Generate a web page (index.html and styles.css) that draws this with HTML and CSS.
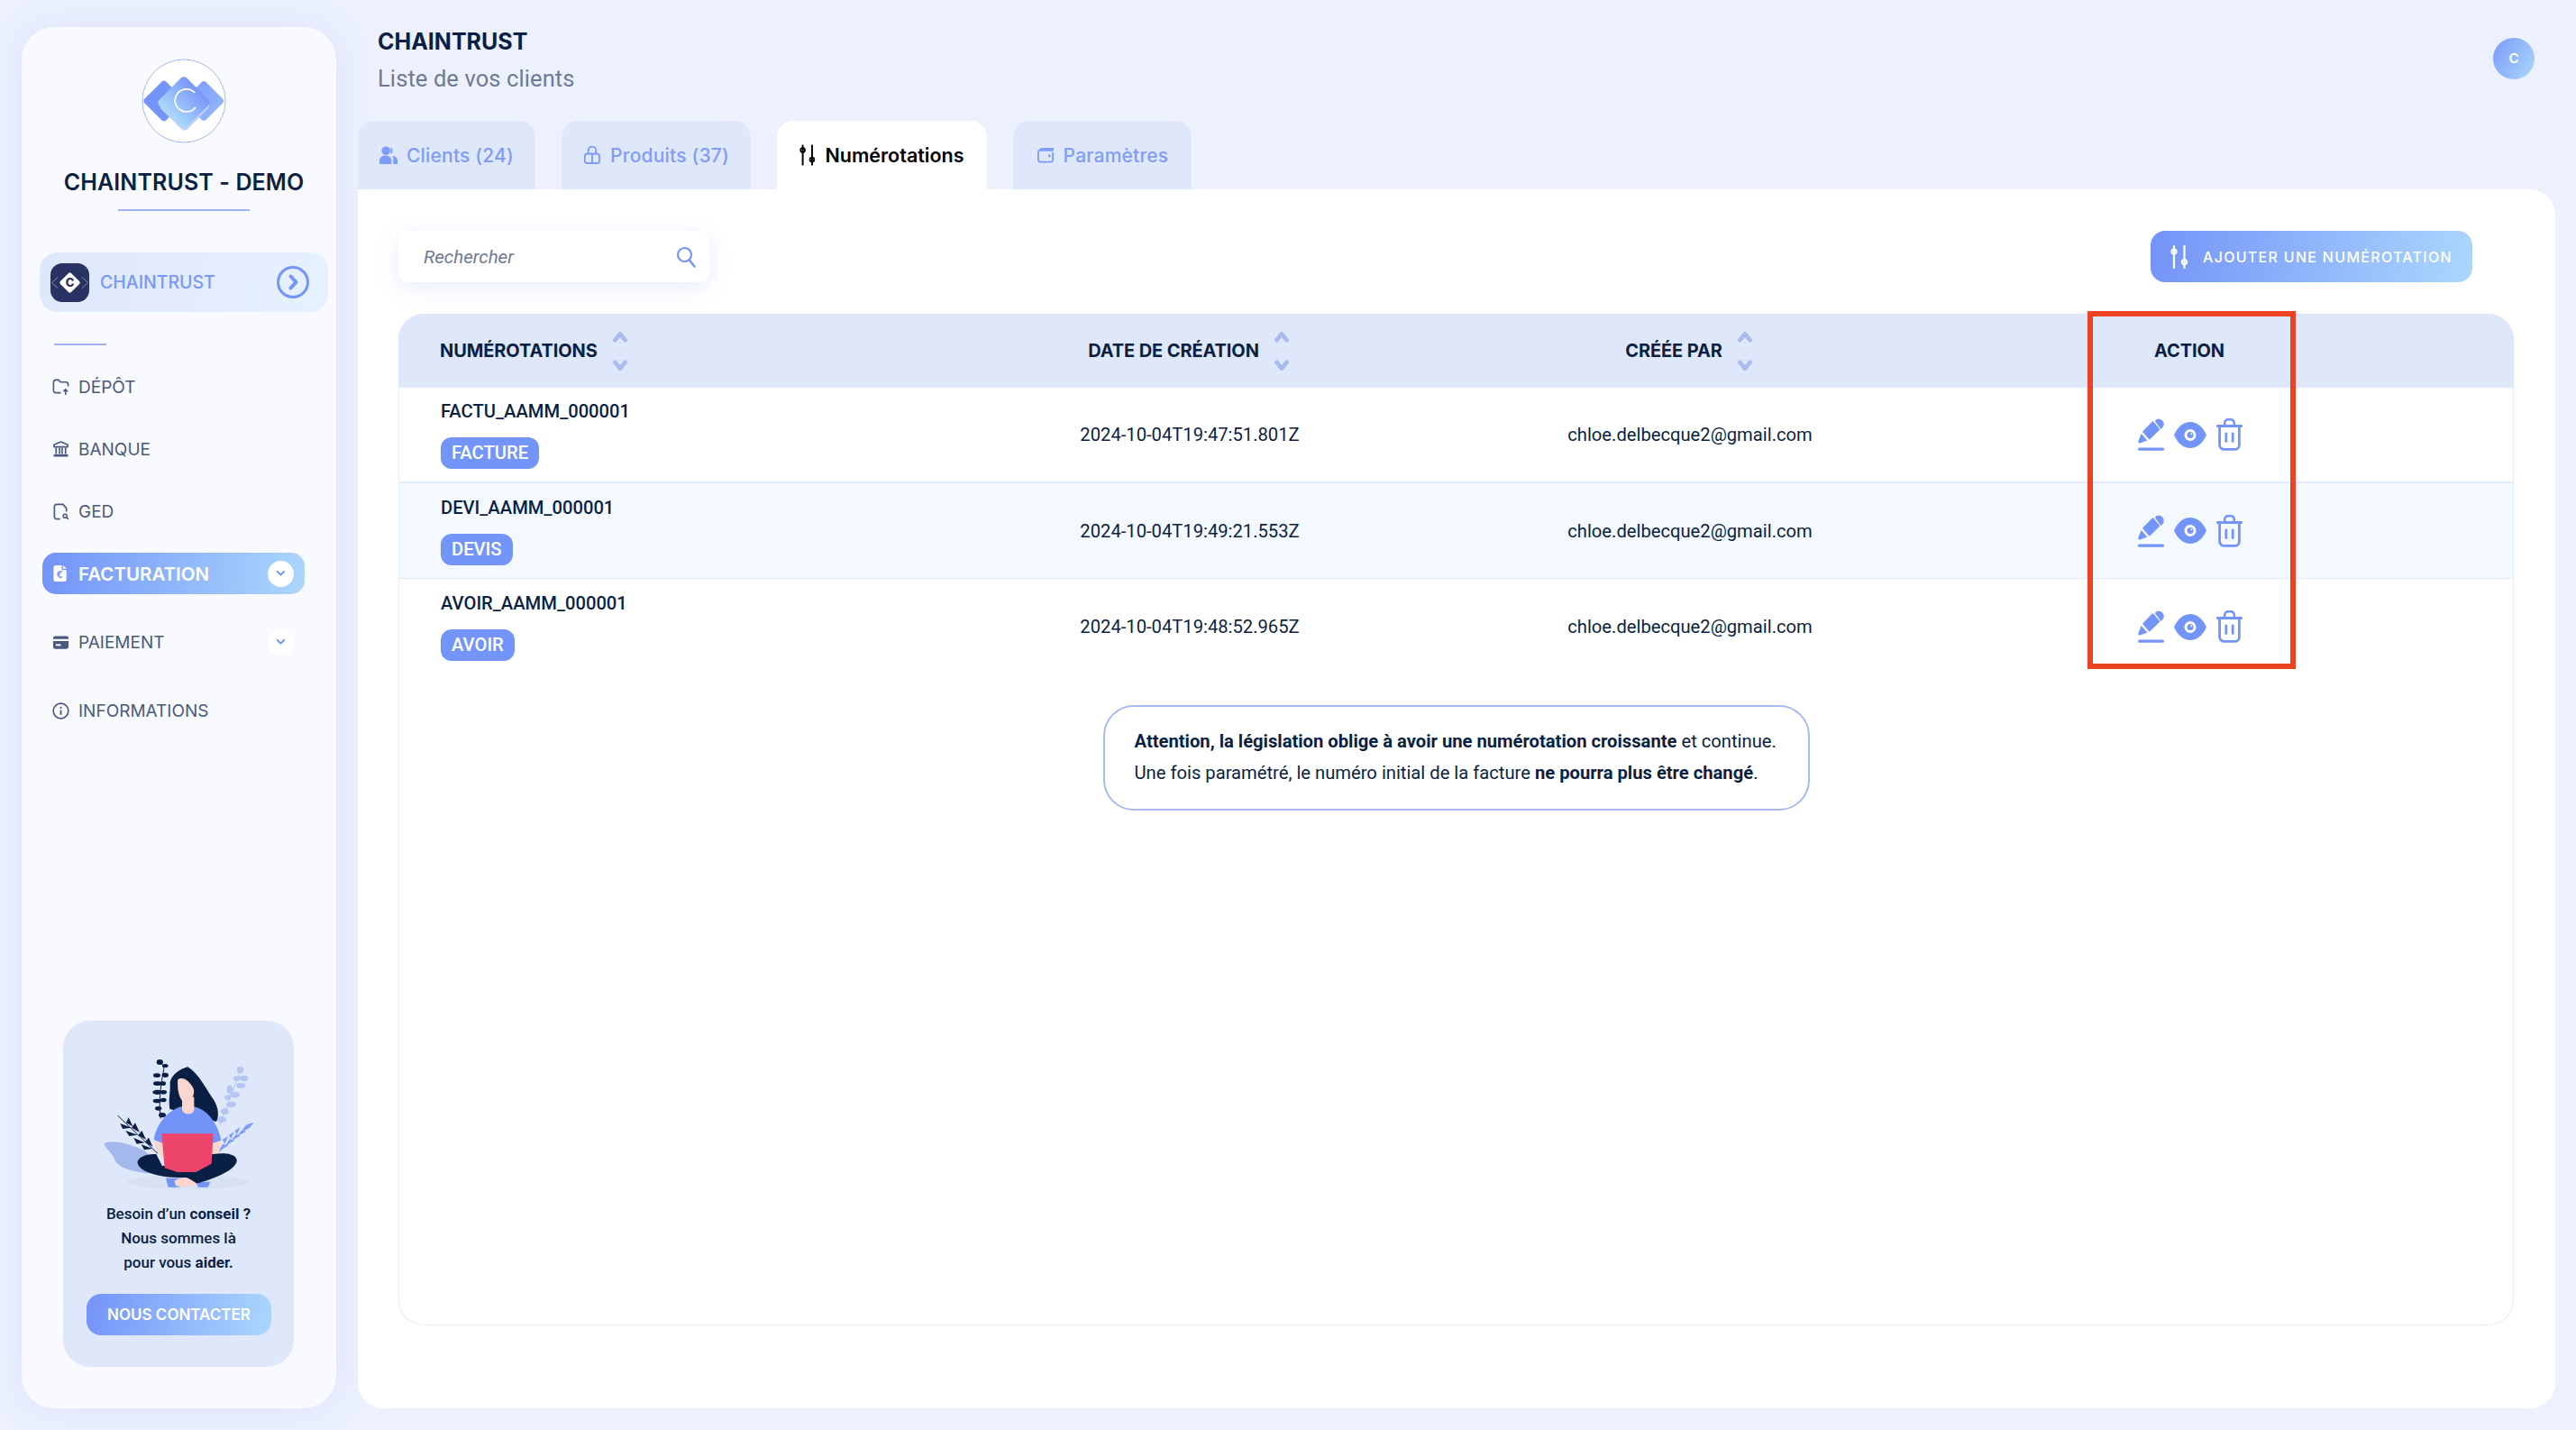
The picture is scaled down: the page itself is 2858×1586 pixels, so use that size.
FILE: index.html
```html
<!DOCTYPE html>
<html lang="fr">
<head>
<meta charset="utf-8">
<title>Chaintrust</title>
<link rel="stylesheet" href="styles.css">
</head>
<body>
<svg class="defs" width="0" height="0" aria-hidden="true">
  <defs>
    <linearGradient id="logoA" x1="0" y1="0" x2="0" y2="1"><stop offset="0" stop-color="#7896f7"/><stop offset="1" stop-color="#abd9fd"/></linearGradient>
    <linearGradient id="logoB" x1="0" y1="0" x2="1" y2="0"><stop offset="0" stop-color="#83a3fa"/><stop offset="1" stop-color="#8fb3fb"/></linearGradient>
    <symbol id="i-up" viewBox="0 0 18 14"><path d="M3 11 9 3.5 15 11" fill="none" stroke="#a9bcf0" stroke-width="5" stroke-linecap="round" stroke-linejoin="round"/></symbol>
    <symbol id="i-down" viewBox="0 0 18 14"><path d="M3 3 9 10.5 15 3" fill="none" stroke="#a9bcf0" stroke-width="5" stroke-linecap="round" stroke-linejoin="round"/></symbol>
    <symbol id="i-edit" viewBox="0 0 29 36">
      <path d="M6 14.8 16.500 4 23.500 12.200 12.800 22.800Z" fill="#7395f9" stroke="#7395f9" stroke-width="1.500" stroke-linejoin="round"/>
      <path d="M19.500 2.200C21.500 .2 25 .4 27.200 2.800 29.400 5.200 29.200 8.200 27.200 10.200L25.400 12 18.800 3Z" fill="#7395f9"/>
      <path d="M3.600 17 10.400 24.600 2.200 27.400C1 27.800 0 26.800.3 25.600Z" fill="#7395f9"/>
      <rect x="0" y="32.600" width="29" height="3.200" rx="1.600" fill="#7395f9"/>
    </symbol>
    <symbol id="i-eye" viewBox="0 0 36 29">
      <path d="M0 14.500C4 5 11 0 18 0s14 5 18 14.500C32 24 25 29 18 29S4 24 0 14.500Z" fill="#7395f9"/>
      <circle cx="18" cy="14.500" r="6.500" fill="#fff"/>
      <circle cx="18" cy="14.500" r="3.500" fill="#7395f9"/>
      <circle cx="19.300" cy="13.200" r="1" fill="#fff"/>
    </symbol>
    <symbol id="i-trash" viewBox="0 0 29 36">
      <path d="M9.200 7V5a3.800 3.800 0 0 1 3.800-3.800h3A3.800 3.800 0 0 1 19.800 5v2" fill="none" stroke="#7395f9" stroke-width="2.600"/>
      <path d="M1.400 8.600h26.200" stroke="#7395f9" stroke-width="3" stroke-linecap="round"/>
      <path d="M3.600 9v20.400a5 5 0 0 0 5 5h11.800a5 5 0 0 0 5-5V9" fill="none" stroke="#7395f9" stroke-width="2.800"/>
      <path d="M10.800 17v8.600M18.200 17v8.600" stroke="#7395f9" stroke-width="2.800" stroke-linecap="round"/>
    </symbol>
    <symbol id="i-sliders" viewBox="0 0 20 26">
      <path d="M4 1v24M15.500 1v24" stroke="currentColor" stroke-width="2.200" stroke-linecap="round"/>
      <circle cx="4" cy="7" r="2.600" fill="none" stroke="currentColor" stroke-width="2"/>
      <circle cx="15.500" cy="18.500" r="2.600" fill="none" stroke="currentColor" stroke-width="2"/>
    </symbol>
    <symbol id="i-chev" viewBox="0 0 16 12"><path d="M2.500 3 8 8.500 13.500 3" fill="none" stroke="#7395f9" stroke-width="3" stroke-linecap="round" stroke-linejoin="round"/></symbol>
  </defs>
</svg>

<div class="app">
  <aside class="sidebar">
    <div class="brand">
      <svg class="brand-logo" viewBox="470 193 284 284">
        <circle cx="612" cy="335" r="139" fill="#fff" stroke="#a4b6ee" stroke-width="3"/>
        <rect x="494" y="284" width="102" height="102" rx="12" transform="rotate(45 545 335)" fill="#7394f8"/>
        <rect x="629" y="285" width="100" height="100" rx="12" transform="rotate(45 679 335)" fill="url(#logoB)"/>
        <rect x="552" y="290" width="124" height="124" rx="14" transform="rotate(45 614 352)" fill="#c3d0fa"/>
        <rect x="547" y="275" width="130" height="130" rx="14" transform="rotate(45 612 340)" fill="url(#logoA)"/>
        <path d="M649 308a38 38 0 1 0 2 48" fill="none" stroke="#fff" stroke-width="5"/>
      </svg>
      <h1 class="brand-name">CHAINTRUST - DEMO</h1>
      <div class="brand-rule"></div>
    </div>

    <div class="workspace">
      <svg class="workspace-logo" viewBox="0 0 43 43">
        <rect width="43" height="43" rx="13" fill="#283263"/>
        <path d="M8 15.500 1.500 21.500 8 27.500M35 15.500 41.500 21.500 35 27.500" fill="none" stroke="#9aa3c4" stroke-width=".8"/>
        <rect x="13" y="13" width="17" height="17" rx="2" transform="rotate(45 21.500 21.500)" fill="#fff"/>
        <text class="workspace-c" x="21.500" y="26" text-anchor="middle">C</text>
      </svg>
      <span class="workspace-name">CHAINTRUST</span>
      <span class="workspace-go">
        <svg viewBox="0 0 36 36" width="36" height="36"><circle cx="18" cy="18" r="16.500" fill="none" stroke="#7395f9" stroke-width="3"/><path d="M15.500 11.500 21.500 18 15.500 24.500" fill="none" stroke="#7395f9" stroke-width="4" stroke-linecap="round" stroke-linejoin="round"/></svg>
      </span>
    </div>

    <div class="divider"></div>

    <nav class="nav">
      <a class="nav-item">
        <svg class="nav-icon" viewBox="0 0 20 20"><path d="M10 16.500H4a2.500 2.500 0 0 1-2.500-2.500V4A2.500 2.500 0 0 1 4 1.500h3.500l2 2.500H16a2.500 2.500 0 0 1 2.500 2.500V9M15.500 19v-6M13 15l2.500-2.500L18 15" fill="none" stroke="#4a5a7d" stroke-width="1.700"/></svg>
        <span>DÉPÔT</span>
      </a>
      <a class="nav-item">
        <svg class="nav-icon" viewBox="0 0 20 20"><path d="M10 1 18 4.500V7H2V4.500Z" fill="none" stroke="#4a5a7d" stroke-width="1.700" stroke-linejoin="round"/><path d="M4.500 8v7M8.500 8v7M11.500 8v7M15.500 8v7" stroke="#4a5a7d" stroke-width="1.800"/><rect x="1.500" y="15.500" width="17" height="3" rx="1.500" fill="#4a5a7d"/></svg>
        <span>BANQUE</span>
      </a>
      <a class="nav-item">
        <svg class="nav-icon" viewBox="0 0 20 20"><path d="M9 18.500H5A2.500 2.500 0 0 1 2.500 16V4A2.500 2.500 0 0 1 5 1.500h7.500L16.500 6v4" fill="none" stroke="#4a5a7d" stroke-width="1.800"/><circle cx="15" cy="15" r="2.200" fill="none" stroke="#4a5a7d" stroke-width="1.600"/><path d="M16.800 16.800 18.800 18.800" stroke="#4a5a7d" stroke-width="1.600"/></svg>
        <span>GED</span>
      </a>
      <a class="nav-item nav-active">
        <svg class="nav-icon" viewBox="0 0 20 20"><path d="M4.500 0H11v5.500h5.500V16a3 3 0 0 1-3 3H4.500a3 3 0 0 1-3-3V3a3 3 0 0 1 3-3Z" fill="#fff"/><path d="M12.500 0 16.500 4H12.500Z" fill="#fff"/><text class="nav-euro" x="8.500" y="15" text-anchor="middle">€</text></svg>
        <span>FACTURATION</span>
        <span class="nav-chev"><svg viewBox="0 0 16 12" width="11" height="8"><use href="#i-chev"/></svg></span>
      </a>
      <a class="nav-item nav-wide">
        <svg class="nav-icon" viewBox="0 0 20 20"><path d="M1 6V5a2.500 2.500 0 0 1 2.500-2.500h13A2.500 2.500 0 0 1 19 5v1ZM1 8.500h18V15a2.500 2.500 0 0 1-2.500 2.500h-13A2.500 2.500 0 0 1 1 15Z" fill="#4a5a7d"/><rect x="4" y="12" width="6" height="2" fill="#fff"/></svg>
        <span>PAIEMENT</span>
        <span class="nav-chev"><svg viewBox="0 0 16 12" width="11" height="8"><use href="#i-chev"/></svg></span>
      </a>
      <a class="nav-item">
        <svg class="nav-icon" viewBox="0 0 20 20"><circle cx="10" cy="10" r="8.800" fill="none" stroke="#4a5a7d" stroke-width="1.700"/><circle cx="10" cy="6.200" r="1.100" fill="#4a5a7d"/><path d="M10 9v5.500" stroke="#4a5a7d" stroke-width="2"/></svg>
        <span>INFORMATIONS</span>
      </a>
    </nav>

    <div class="help">
      <svg class="help-art" viewBox="225 165 510 435">
        <ellipse cx="507" cy="573" rx="203" ry="24" fill="#d7e1f2"/>
        <path d="M226 445C250 432 290 442 320 452 360 462 380 480 395 510L370 545C320 535 280 530 262 500 258 478 235 470 226 445Z" fill="#a5b8ec"/>
        <g fill="none" stroke="#0a1f44" stroke-width="3">
          <path d="M415 362C408 320 412 260 425 200 428 182 410 170 404 178"/>
          <path d="M272 352 405 478"/>
        </g>
        <g fill="#0a1f44">
          <ellipse cx="412" cy="174" rx="11" ry="9"/><ellipse cx="430" cy="186" rx="10" ry="6"/><ellipse cx="402" cy="218" rx="12" ry="7"/><ellipse cx="430" cy="217" rx="11" ry="8"/><ellipse cx="404" cy="245" rx="14" ry="7"/><ellipse cx="422" cy="245" rx="10" ry="7"/><ellipse cx="404" cy="274" rx="16" ry="8"/><ellipse cx="424" cy="274" rx="11" ry="7"/><ellipse cx="403" cy="303" rx="14" ry="7"/><ellipse cx="424" cy="300" rx="10" ry="7"/><ellipse cx="407" cy="328" rx="11" ry="7"/><ellipse cx="420" cy="350" rx="12" ry="8"/>
          <path d="M308 358 322 388 300 376ZM330 376 345 408 318 392ZM352 402 366 432 340 418ZM375 425 388 455 362 440ZM280 378 318 392 288 396ZM298 402 338 416 310 420ZM325 426 362 442 335 446ZM350 448 388 462 360 466Z"/>
        </g>
        <g stroke="#b6c6f3" fill="#b6c6f3" stroke-width="3">
          <path d="M680 205 610 385" fill="none"/>
          <circle cx="680" cy="200" r="10"/><ellipse cx="692" cy="228" rx="13" ry="8"/><ellipse cx="668" cy="228" rx="11" ry="7"/><ellipse cx="682" cy="252" rx="14" ry="8"/><ellipse cx="645" cy="265" rx="9" ry="13"/><ellipse cx="662" cy="283" rx="15" ry="8"/><ellipse cx="638" cy="292" rx="10" ry="8"/><ellipse cx="650" cy="315" rx="15" ry="8"/><ellipse cx="628" cy="338" rx="12" ry="9"/><ellipse cx="618" cy="365" rx="14" ry="9"/>
        </g>
        <path d="M722 376 608 472" fill="none" stroke="#7f9df8" stroke-width="4"/>
        <path d="M722 378C705 376 695 385 688 398 703 402 712 392 722 378ZM680 390 668 416 662 402ZM660 406 648 430 642 416ZM640 420 628 446 620 432ZM700 405 672 418 685 400ZM680 420 652 432 665 415ZM660 436 632 448 645 430ZM640 452 608 468 622 446Z" fill="#7f9df8"/>
        <path d="M505 190C480 196 452 215 446 240 448 270 440 300 445 330L600 372C612 350 605 315 585 290 565 262 540 210 505 190Z" fill="#0a1f44"/>
        <path d="M590 430H615C618 470 600 490 585 500ZM395 430H422L425 500C405 480 395 460 395 430Z" fill="#fbd6cf"/>
        <path d="M490 320C440 330 400 380 392 432 402 436 412 440 422 444L586 444C596 440 606 438 616 434 606 380 570 330 525 322Z" fill="#7393f8"/>
        <path d="M472 232C490 218 515 240 525 265 528 285 515 310 500 310 480 310 468 270 472 232Z" fill="#fbd6cf"/>
        <path d="M486 290H526V332C526 350 490 352 486 332Z" fill="#fbd6cf"/>
        <path d="M432 560H490L530 575 470 590H440ZM530 572H580L572 590H540Z" fill="#7393f8"/>
        <path d="M460 570C475 555 540 552 540 578 530 590 480 590 465 585Z" fill="#fbd6cf"/>
        <path d="M400 480C360 478 335 495 338 510 345 540 410 560 500 558 510 560 530 575 535 578 600 560 670 530 668 500 665 478 630 475 590 480L420 520Z" fill="#0a1f44"/>
        <path d="M418 412H590L584 512 532 540H470L428 526Z" fill="#ec446b"/>
      </svg>
      <p class="help-text">Besoin d’un <b>conseil ?</b><br>Nous sommes là<br>pour vous <b>aider.</b></p>
      <button class="help-btn">NOUS CONTACTER</button>
    </div>
  </aside>

  <main class="main">
    <header class="topbar">
      <div>
        <h2 class="page-title">CHAINTRUST</h2>
        <p class="page-sub">Liste de vos clients</p>
      </div>
      <div class="avatar">C</div>
    </header>

    <div class="tabs">
      <a class="tab">
        <svg class="tab-icon" viewBox="0 0 21 21"><circle cx="7.500" cy="5.500" r="5" fill="#7e9cf9"/><path d="M0 21v-4c0-4 3-6 7-6s7 2 7 6v4Z" fill="#7e9cf9"/><path d="M13 1.500a4.500 4.500 0 0 1 0 8ZM15 11.500c3.500 0 6 2 6 5.500v4h-5v-5c0-2-.2-3.500-1-4.500Z" fill="#7e9cf9"/></svg>
        <span>Clients (24)</span>
      </a>
      <a class="tab">
        <svg class="tab-icon" viewBox="0 0 21 21"><path d="M6 9V5a4.500 4.500 0 0 1 9 0v4" fill="none" stroke="#7e9cf9" stroke-width="2"/><rect x="2" y="9" width="17" height="11" rx="3" fill="none" stroke="#7e9cf9" stroke-width="2"/><path d="M10.500 9v11" stroke="#7e9cf9" stroke-width="2"/></svg>
        <span>Produits (37)</span>
      </a>
      <a class="tab tab-active">
        <svg class="tab-icon tab-sliders" viewBox="0 0 20 26"><use href="#i-sliders"/></svg>
        <span>Numérotations</span>
      </a>
      <a class="tab">
        <svg class="tab-icon" viewBox="0 0 21 21"><path d="M19 5H4.500A2.500 2.500 0 0 0 2 7.500V16a2.500 2.500 0 0 0 2.500 2.500h12A2.500 2.500 0 0 0 19 16V7M3 6c.5-2 2-3 3.500-3H19v2" fill="none" stroke="#7e9cf9" stroke-width="1.900"/><circle cx="15" cy="11.500" r="1.500" fill="#7e9cf9"/></svg>
        <span>Paramètres</span>
      </a>
    </div>

    <section class="panel">
      <div class="toolbar">
        <label class="search">
          <span class="search-text">Rechercher</span>
          <svg viewBox="0 0 22 24" width="22" height="24"><circle cx="9.500" cy="9.500" r="7.500" fill="none" stroke="#7395f9" stroke-width="2.200"/><path d="M15 15.500 20.500 22.500" stroke="#7395f9" stroke-width="2.400" stroke-linecap="round"/></svg>
        </label>
        <button class="add-btn">
          <svg class="add-icon" viewBox="0 0 20 26"><use href="#i-sliders"/></svg>
          <span>AJOUTER UNE NUMÉROTATION</span>
        </button>
      </div>

      <div class="table">
        <div class="thead row-grid">
          <div class="th th-first">NUMÉROTATIONS <span class="sort"><svg viewBox="0 0 18 14"><use href="#i-up"/></svg><svg viewBox="0 0 18 14"><use href="#i-down"/></svg></span></div>
          <div class="th th-center">DATE DE CRÉATION <span class="sort"><svg viewBox="0 0 18 14"><use href="#i-up"/></svg><svg viewBox="0 0 18 14"><use href="#i-down"/></svg></span></div>
          <div class="th th-center">CRÉÉE PAR <span class="sort"><svg viewBox="0 0 18 14"><use href="#i-up"/></svg><svg viewBox="0 0 18 14"><use href="#i-down"/></svg></span></div>
          <div class="th th-center">ACTION</div>
        </div>

        <div class="tr row-grid">
          <div class="td-name"><span class="name">FACTU_AAMM_000001</span><span class="badge">FACTURE</span></div>
          <div class="td">2024-10-04T19:47:51.801Z</div>
          <div class="td">chloe.delbecque2@gmail.com</div>
          <div class="actions">
            <svg class="act-a" viewBox="0 0 29 36"><use href="#i-edit"/></svg>
            <svg class="act-b" viewBox="0 0 36 29"><use href="#i-eye"/></svg>
            <svg class="act-a" viewBox="0 0 29 36"><use href="#i-trash"/></svg>
          </div>
        </div>
        <div class="tr row-grid tr-alt">
          <div class="td-name"><span class="name">DEVI_AAMM_000001</span><span class="badge">DEVIS</span></div>
          <div class="td">2024-10-04T19:49:21.553Z</div>
          <div class="td">chloe.delbecque2@gmail.com</div>
          <div class="actions">
            <svg class="act-a" viewBox="0 0 29 36"><use href="#i-edit"/></svg>
            <svg class="act-b" viewBox="0 0 36 29"><use href="#i-eye"/></svg>
            <svg class="act-a" viewBox="0 0 29 36"><use href="#i-trash"/></svg>
          </div>
        </div>
        <div class="tr row-grid tr-last">
          <div class="td-name"><span class="name">AVOIR_AAMM_000001</span><span class="badge">AVOIR</span></div>
          <div class="td">2024-10-04T19:48:52.965Z</div>
          <div class="td">chloe.delbecque2@gmail.com</div>
          <div class="actions">
            <svg class="act-a" viewBox="0 0 29 36"><use href="#i-edit"/></svg>
            <svg class="act-b" viewBox="0 0 36 29"><use href="#i-eye"/></svg>
            <svg class="act-a" viewBox="0 0 29 36"><use href="#i-trash"/></svg>
          </div>
        </div>

        <div class="notice">
          <p><b>Attention, la législation oblige à avoir une numérotation croissante</b> et continue.</p>
          <p>Une fois paramétré, le numéro initial de la facture <b>ne pourra plus être changé</b>.</p>
        </div>

        <div class="highlight"></div>
      </div>
    </section>
  </main>
</div>
</body>
</html>
```
FILE: styles.css
```css
* { box-sizing: border-box; }
html, body { margin: 0; height: 100%; }
body {
  background: #ecf1fd;
  color: #0b1f44;
  font-family: "Roboto", "Liberation Sans", sans-serif;
  overflow: hidden;
}
p, h1, h2 { margin: 0; }
.defs { position: absolute; }
.app {
  display: grid;
  grid-template-columns: 349px 1fr;
  column-gap: 24px;
  height: 1586px;
  padding: 30px 23px 24px 24px;
}

/* Sidebar */
.sidebar {
  display: flex;
  flex-direction: column;
  background: #f8faff;
  border-radius: 36px;
  padding-top: 35px;
  box-shadow: 0 0 40px rgba(110, 140, 245, 0.14);
}
.brand { display: flex; flex-direction: column; align-items: center; padding-left: 11px; }
.brand-logo { width: 94px; height: 94px; display: block; }
.brand-name {
  margin-top: 27px;
  font: 600 25px/32px "Inter", sans-serif;
  letter-spacing: 0.1px;
  white-space: nowrap;
}
.brand-rule { margin-top: 14px; width: 146px; height: 2px; background: #9fb2ee; }
.workspace {
  display: flex;
  align-items: center;
  margin: 46px 9px 0 20px;
  height: 66px;
  padding: 0 21px 0 12px;
  border-radius: 20px;
  background: linear-gradient(100deg, #dfe7fb, #e6f1ff);
}
.workspace-logo { width: 43px; height: 43px; flex: none; }
.workspace-c { font: 800 13px "Inter", sans-serif; fill: #283263; }
.workspace-name {
  margin-left: 12px;
  font: 500 19.500px "Inter", sans-serif;
  color: #7798f9;
}
.workspace-go { margin-left: auto; display: flex; }
.divider { margin: 35px 0 0 36px; width: 58px; height: 2px; background: #9fb2ee; }
.nav { margin: 23px 35px 0 23px; display: flex; flex-direction: column; gap: 23px; }
.nav-item {
  display: flex;
  align-items: center;
  height: 46px;
  padding: 0 12px 0 11px;
  border-radius: 15px;
  font: 400 19px "Inter", sans-serif;
  color: #4a5a7d;
}
.nav-icon { width: 19px; height: 19px; flex: none; margin-right: 10px; }
.nav-active {
  background: linear-gradient(100deg, #7393f8, #abd7fd);
  color: #fff;
  font-weight: 600;
  font-size: 20.500px;
}
.nav-active, .nav-wide { margin-bottom: 7px; }
.nav-euro { font: 700 11px "Inter", sans-serif; fill: #7393f8; }
.nav-chev {
  margin-left: auto;
  width: 29px;
  height: 29px;
  border-radius: 50%;
  background: #fff;
  display: flex;
  align-items: center;
  justify-content: center;
}
.help {
  margin: auto 47px 46px 46px;
  height: 384px;
  padding: 43px 26px 0;
  border-radius: 30px;
  background: #dfe8fb;
  text-align: center;
}
.help-art { display: block; width: 170px; height: 145px; margin-left: 19px; }
.help-text {
  margin-top: 13px;
  font: 500 17px/27px "Roboto", sans-serif;
  white-space: nowrap;
}
.help-text b { font-weight: 700; }
.help-btn {
  display: block;
  margin-top: 21px;
  width: 205px;
  height: 46px;
  border: 0;
  border-radius: 16px;
  background: linear-gradient(100deg, #7393f8, #abd7fd);
  color: #fff;
  font: 600 17px "Inter", sans-serif;
  white-space: nowrap;
  padding: 0;
}

/* Main */
.main { display: flex; flex-direction: column; min-width: 0; }
.topbar { display: flex; justify-content: space-between; padding: 0 23px 0 22px; }
.page-title { font: 700 25px/32px "Inter", sans-serif; }
.page-sub { margin-top: 8px; font: 400 25.500px/34px "Roboto", sans-serif; color: #6e7a96; letter-spacing: 0.1px; }
.avatar {
  margin-top: 12px;
  width: 46px;
  height: 46px;
  border-radius: 50%;
  background: linear-gradient(120deg, #7c9af8, #abd7fd);
  color: #fff;
  font: 600 15px/46px "Inter", sans-serif;
  text-align: center;
}
.tabs {
  margin-top: 30px;
  display: grid;
  grid-template-columns: 197px 210px 233px 198px;
  column-gap: 29px;
}
.tab {
  display: flex;
  align-items: center;
  justify-content: center;
  gap: 10px;
  height: 76px;
  border-radius: 18px 18px 0 0;
  background: #dfe8fb;
  color: #7e9cf9;
  font: 500 21px "Inter", sans-serif;
  white-space: nowrap;
  letter-spacing: 0.2px;
}
.tab-active { background: #fff; color: #000; font-weight: 600; font-size: 21.500px; letter-spacing: 0; }
.tab-icon { width: 20px; height: 20px; flex: none; }
.tab-sliders { width: 18px; height: 24px; }
.panel {
  flex: 1;
  display: flex;
  flex-direction: column;
  padding: 46px 46px 92px 45px;
  background: #fff;
  border-radius: 0 28px 28px 28px;
}
.toolbar { display: flex; justify-content: space-between; padding-right: 46px; }
.search {
  display: flex;
  align-items: center;
  justify-content: space-between;
  width: 345px;
  height: 57px;
  padding: 0 15px 0 28px;
  border-radius: 10px;
  background: #fff;
  box-shadow: 0 6px 24px rgba(110, 140, 230, 0.16);
}
.search-text { font: italic 400 20.500px "Roboto", sans-serif; color: #6e7a96; }
.add-btn {
  display: flex;
  align-items: center;
  gap: 16px;
  width: 357px;
  height: 57px;
  padding: 0 0 0 22px;
  border: 0;
  border-radius: 16px;
  background: linear-gradient(100deg, #7393f8, #abd7fd);
  color: #fff;
  font: 500 16px "Inter", sans-serif;
  letter-spacing: 1.300px;
  white-space: nowrap;
}
.add-icon { width: 20px; height: 26px; flex: none; }
.table {
  position: relative;
  flex: 1;
  margin-top: 35px;
  display: flex;
  flex-direction: column;
  border: 1px solid #e6edfb;
  border-top: 0;
  border-radius: 28px;
}
.row-grid {
  display: grid;
  grid-template-columns: 587px 580px 530px 580px 1fr;
  align-items: center;
}
.thead { height: 82px; margin: 0 -1px; background: #dfe8fb; border-radius: 28px 28px 0 0; }
.th {
  display: flex;
  align-items: center;
  gap: 16px;
  font: 700 20px "Inter", sans-serif;
  letter-spacing: -0.1px;
  white-space: nowrap;
}
.th-first { padding-left: 46px; }
.th-center { justify-content: center; }
.sort { display: flex; flex-direction: column; gap: 19px; }
.sort svg { display: block; width: 18px; height: 13px; }
.tr { height: 106px; text-align: center; font: 400 20.200px "Roboto", sans-serif; border-bottom: 2px solid #e3eafb; }
.tr-alt { background: #f4f8ff; border-bottom-width: 1px; }
.tr-last { border-bottom: 0; }
.td-name { display: flex; flex-direction: column; align-items: flex-start; gap: 18px; padding: 1px 0 0 46px; text-align: left; }
.name { font: 500 20.200px/22px "Roboto", sans-serif; }
.badge {
  height: 35px;
  padding: 0 12px;
  border-radius: 12px;
  background: #7395f9;
  color: #fff;
  font: 500 20.200px/35px "Roboto", sans-serif;
}
.td { white-space: nowrap; }
.actions { display: flex; justify-content: center; align-items: center; gap: 11px; }
.act-a { width: 29px; height: 36px; display: block; }
.act-b { width: 36px; height: 29px; display: block; }
.notice {
  align-self: center;
  margin-top: 34px;
  width: 784px;
  height: 117px;
  padding: 21px 0 0 33px;
  border: 2px solid #a8bbf0;
  border-radius: 34px;
  font: 400 20.200px/35px "Roboto", sans-serif;
  white-space: nowrap;
}
.notice b { font-weight: 700; }
.highlight {
  position: absolute;
  left: 1873px;
  top: -3px;
  width: 231px;
  height: 397px;
  border: 6px solid #ee4322;
  pointer-events: none;
}
```
